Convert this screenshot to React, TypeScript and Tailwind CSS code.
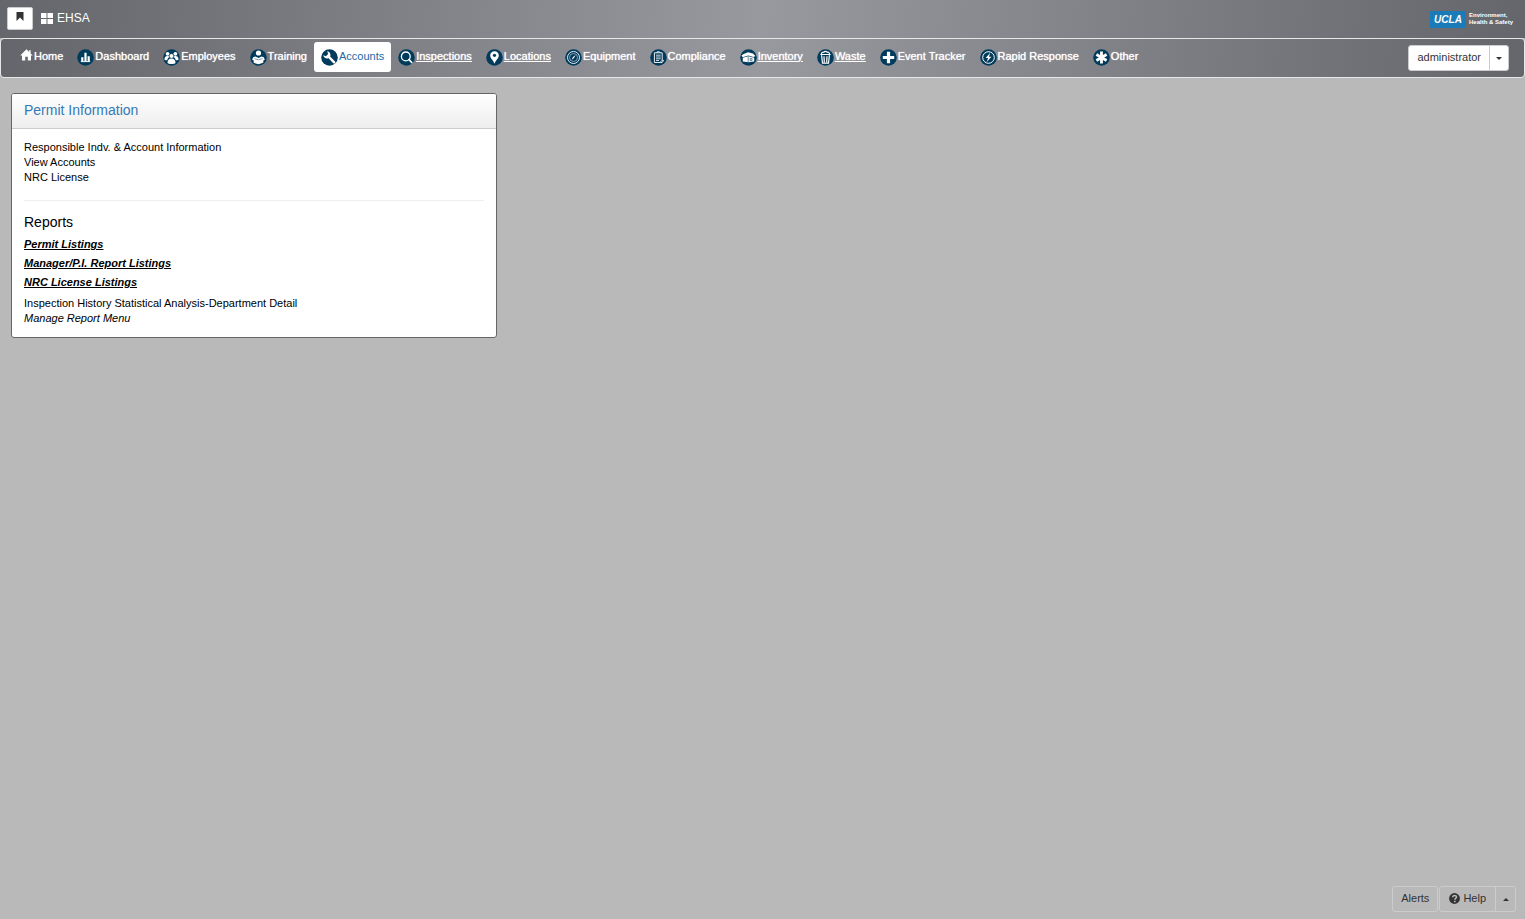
import type { ReactNode } from "react";
import clsx from "clsx";

type NavItem = {
  label: string;
  icon: ReactNode;
  active?: boolean;
  underline?: boolean;
};

const Badge = ({ children }: { children: ReactNode }) => (
  <svg viewBox="0 0 17 17" className="size-[17px] shrink-0" aria-hidden="true">
    <circle cx="8.5" cy="8.5" r="8.3" fill="#003b5c" />
    {children}
  </svg>
);

const HomeIcon = () => (
  <svg viewBox="0 0 13 12" className="mb-1 h-3 w-[13px] shrink-0" fill="#fff" aria-hidden="true">
    <path d="M6.5 0.3 L0.2 6.6 H2 V11.4 H5.2 V7.8 H7.8 V11.4 H11 V6.6 H12.8 L10.6 4.4 V1.2 H9.1 V2.9 Z" />
  </svg>
);

const items: NavItem[] = [
  { label: "Home", icon: <HomeIcon /> },
  {
    label: "Dashboard",
    icon: (
      <Badge>
        <path d="M4.2 8.3h2.2v4H4.2zM7.4 3.8h2.2v8.5H7.4zM10.6 7.2h2.2v5.1h-2.2z" fill="#fff" />
        <path d="M3.8 12.6h9.4" stroke="#fff" strokeWidth="1" />
      </Badge>
    ),
  },
  {
    label: "Employees",
    icon: (
      <Badge>
        <g fill="#fff">
          <circle cx="4.6" cy="4.8" r="1.9" />
          <circle cx="12.4" cy="4.8" r="1.9" />
          <path d="M1.4 10.5c0-2.4 1.3-3.5 3.2-3.5 1 0 1.6.4 2 1-1.4.6-2.1 1.7-2.4 3.2-1.2.1-2.8-.2-2.8-.7zM15.6 10.5c0-2.4-1.3-3.5-3.2-3.5-1 0-1.6.4-2 1 1.4.6 2.1 1.7 2.4 3.2 1.2.1 2.8-.2 2.8-.7z" />
          <circle cx="8.5" cy="7" r="2.3" stroke="#003b5c" strokeWidth=".5" />
          <path d="M4.5 14c0-3 1.5-4.5 4-4.5s4 1.5 4 4.5c-1.2 1.3-6.8 1.3-8 0z" />
        </g>
      </Badge>
    ),
  },
  {
    label: "Training",
    icon: (
      <Badge>
        <g fill="#fff">
          <circle cx="8.5" cy="4" r="2.6" />
          <path d="M3.2 8.2l2.2-.8 3.1 1.6 3.1-1.6 2.2.8 1 2.6-1.5.6v2.4l-4.8 1.5-4.8-1.5v-2.4l-1.5-.6z" />
        </g>
        <path d="M4.4 9.6l4.1 1.2 4.1-1.2" fill="none" stroke="#003b5c" strokeWidth=".5" />
      </Badge>
    ),
  },
  {
    label: "Accounts",
    active: true,
    icon: (
      <Badge>
        <path d="M7 7l6.2 6.4" stroke="#fff" strokeWidth="2.5" strokeLinecap="round" />
        <path d="M2.3 6.2c.3 2.4 2.8 3.8 5.1 3l1.9-1.9c.7-2.4-.7-4.8-3.2-5.1l1.1 2.7-2.2 2.3z" fill="#fff" />
      </Badge>
    ),
  },
  {
    label: "Inspections",
    underline: true,
    icon: (
      <Badge>
        <circle cx="7.8" cy="7.4" r="4.4" fill="none" stroke="#fff" strokeWidth="1.3" />
        <path d="M11 10.7l2.7 2.8" stroke="#fff" strokeWidth="1.8" strokeLinecap="round" />
      </Badge>
    ),
  },
  {
    label: "Locations",
    underline: true,
    icon: (
      <Badge>
        <path d="M8.5 2.2c-2.6 0-4.3 1.8-4.3 4.2 0 2.9 3 4.5 4.3 8.3 1.3-3.8 4.3-5.4 4.3-8.3 0-2.4-1.7-4.2-4.3-4.2z" fill="#fff" />
        <circle cx="8.5" cy="6.3" r="1.6" fill="#003b5c" />
      </Badge>
    ),
  },
  {
    label: "Equipment",
    icon: (
      <Badge>
        <circle cx="8.5" cy="8.5" r="6" fill="none" stroke="#fff" strokeWidth=".9" />
        <circle cx="8.5" cy="8.5" r="4" fill="none" stroke="#b8c8d2" strokeWidth=".7" />
        <path d="M10.6 6L9 9l-2.5 1.9L8 8z" fill="#fff" />
      </Badge>
    ),
  },
  {
    label: "Compliance",
    icon: (
      <Badge>
        <path d="M4.4 3.8h7.8v7.4l-2.2 2.3H4.4zM6.5 3.8c0-1.6 3.6-1.6 3.6 0M12.2 11.4h1.4l-1.5 2.2h-2" fill="none" stroke="#fff" strokeWidth=".9" />
        <path d="M6 6.2h4.7M6 8h4.7M6 9.8h4.7M6 11.5h3" stroke="#fff" strokeWidth=".8" />
      </Badge>
    ),
  },
  {
    label: "Inventory",
    underline: true,
    icon: (
      <Badge>
        <g fill="#fff">
          <path d="M3.6 5L8 3.2l4.9 1.2 2.6 2.5-2 1.1-5.2-1.4-5.6 1.6-1.2-1.6z" />
          <path d="M2.8 8.7l5.5-1.5 5.9 1.5v3.9l-5.9.6-5.5-.6z" />
        </g>
        <path d="M8.2 7.5v5.4M10.2 9.4h1.8v2.2h-1.8z" fill="none" stroke="#003b5c" strokeWidth=".6" />
      </Badge>
    ),
  },
  {
    label: "Waste",
    underline: true,
    icon: (
      <Badge>
        <path d="M3.4 5.5h10.2M4.4 5.3c0-1.8 1.3-2.5 2.3-2 1-1 2.6-1 3.6 0 1.3-.4 2.4.5 2.3 2" fill="none" stroke="#fff" strokeWidth="1.2" />
        <path d="M4.6 6.2l.9 8h6l.9-8M7 7.2l.3 6M10 7.2l-.3 6" fill="none" stroke="#fff" strokeWidth="1.2" />
      </Badge>
    ),
  },
  {
    label: "Event Tracker",
    icon: (
      <Badge>
        <path d="M6.9 2.8h3.2v4.1h4.1v3.2h-4.1v4.1H6.9v-4.1H2.8V6.9h4.1z" fill="#fff" />
      </Badge>
    ),
  },
  {
    label: "Rapid Response",
    icon: (
      <Badge>
        <circle cx="8.5" cy="8.5" r="5.8" fill="none" stroke="#fff" strokeWidth="1" />
        <path d="M10.2 3.8L5.7 8.9h2.4l-1.5 4.3 4.8-5.5H8.9z" fill="#fff" />
      </Badge>
    ),
  },
  {
    label: "Other",
    icon: (
      <Badge>
        <path d="M8.5 2.6v11.8M3.4 5.5l10.2 6M13.6 5.5l-10.2 6" stroke="#fff" strokeWidth="2.8" />
      </Badge>
    ),
  },
];

const links = ["Responsible Indv. & Account Information", "View Accounts", "NRC License"];
const listings = ["Permit Listings", "Manager/P.I. Report Listings", "NRC License Listings"];

function TopBar() {
  return (
    <header className="flex h-[38px] items-center justify-between bg-[linear-gradient(95deg,#65666b,#98999e_50%,#65666b)] pr-3 pb-0.5 pl-[7px]">
      <div className="flex items-center gap-2">
        <button
          type="button"
          aria-label="Bookmark"
          className="flex h-[23px] w-[26px] items-start justify-center rounded-[2px] border border-[#ccc] bg-white pt-1"
        >
          <svg viewBox="0 0 8 9" className="h-[9px] w-2" fill="#333" aria-hidden="true">
            <path d="M.5 0h7v9L4 5.6.5 9z" />
          </svg>
        </button>
        <a href="#" className="flex items-center gap-1 text-xs text-white">
          <svg viewBox="0 0 12 11" className="h-[11px] w-3" fill="#fff" aria-hidden="true">
            <path d="M0 0h5.5v5H0zM6.5 0H12v5H6.5zM0 6h5.5v5H0zM6.5 6H12v5H6.5z" />
          </svg>
          EHSA
        </a>
      </div>
      <a href="#" className="flex items-center gap-[3px] pt-0.5 text-white">
        <span className="flex h-[17px] w-[36px] items-center justify-center bg-[#1b7bb9] pt-px text-[10px] leading-4 font-bold italic">
          UCLA
        </span>
        <span className="text-[6px] leading-[7px] font-bold">
          Environment,
          <br />
          Health &amp; Safety
        </span>
      </a>
    </header>
  );
}

function NavBar() {
  return (
    <nav className="flex h-10 items-start justify-between rounded-[4px] border border-[#e7e7e7] bg-[linear-gradient(92deg,#65666b,#98999e_50%,#65666b)] pt-[3px] pr-[15px] pl-3">
      <ul className="flex">
        {items.map(({ label, icon, active, underline }) => (
          <li key={label}>
            <a
              href="#"
              className={clsx(
                "flex h-[30px] items-center gap-px rounded-[3px] px-[7px] whitespace-nowrap",
                active ? "bg-white text-[#1c69a5]" : "text-white [text-shadow:0_0_1px_#fff]"
              )}
            >
              {icon}
              <span className={clsx("pb-0.5", underline && "underline")}>{label}</span>
            </a>
          </li>
        ))}
      </ul>
      <div className="mt-[3px] flex h-[26px] rounded-[3px] border border-[#ccc] bg-white text-[#333]">
        <button type="button" className="px-2 pb-0.5">
          administrator
        </button>
        <button
          type="button"
          aria-label="Account menu"
          className="flex w-[19px] items-center justify-center border-l border-[#ccc]"
        >
          <svg viewBox="0 0 6 3" className="h-[3px] w-1.5" fill="#333" aria-hidden="true">
            <path d="M0 0h6L3 3z" />
          </svg>
        </button>
      </div>
    </nav>
  );
}

function PermitPanel() {
  return (
    <section className="rounded-[3px] border border-[#636569] bg-white text-black">
      <h2 className="h-[35px] rounded-t-[2px] border-b border-[#ccc] bg-linear-to-b from-white to-[#eee] px-3 pt-1.5 text-sm text-[#337ab7]">
        <a href="#">Permit Information</a>
      </h2>
      <div className="px-3 pt-[11px] pb-[11px] leading-[15px]">
        <ul>
          {links.map((link) => (
            <li key={link}>
              <a href="#">{link}</a>
            </li>
          ))}
        </ul>
        <hr className="mt-[15px] mb-3 border-[#eee]" />
        <h3 className="mb-1 text-sm leading-[18px]">Reports</h3>
        <ul className="mb-1 leading-[19px] font-bold italic underline">
          {listings.map((listing) => (
            <li key={listing}>
              <a href="#">{listing}</a>
            </li>
          ))}
        </ul>
        <a href="#" className="block">
          Inspection History Statistical Analysis-Department Detail
        </a>
        <a href="#" className="block italic">
          Manage Report Menu
        </a>
      </div>
    </section>
  );
}

function Footer() {
  return (
    <footer className="mt-auto flex justify-end gap-px pr-[9px] pb-[7px] text-[#333]">
      <button type="button" className="h-[26px] rounded-[3px] border border-[#ccc] px-2 pb-0.5">
        Alerts
      </button>
      <div className="flex h-[26px] rounded-[3px] border border-[#ccc]">
        <button type="button" className="flex items-center gap-[3px] px-[9px] pb-0.5">
          <svg viewBox="0 0 11 11" className="size-[11px]" aria-hidden="true">
            <circle cx="5.5" cy="5.5" r="5.4" fill="#333" />
            <path d="M3.7 4.3c0-2.4 3.8-2.3 3.8-.2 0 1.3-1.7 1.3-1.7 2.6" fill="none" stroke="#b9b9b9" strokeWidth="1.5" />
            <path d="M5 7.7h1.6v1.5H5z" fill="#b9b9b9" />
          </svg>
          Help
        </button>
        <button
          type="button"
          aria-label="Help menu"
          className="flex w-5 items-center justify-center border-l border-[#ccc]"
        >
          <svg viewBox="0 0 6 3" className="h-[3px] w-1.5" fill="#333" aria-hidden="true">
            <path d="M0 3h6L3 0z" />
          </svg>
        </button>
      </div>
    </footer>
  );
}

export default function App() {
  return (
    <div className="flex min-h-screen flex-col bg-[#b9b9b9] font-['Liberation_Sans',Arial,sans-serif] text-[11px]">
      <TopBar />
      <NavBar />
      <main className="grid grid-cols-3 gap-[22px] px-[11px] pt-[15px]">
        <PermitPanel />
      </main>
      <Footer />
    </div>
  );
}
